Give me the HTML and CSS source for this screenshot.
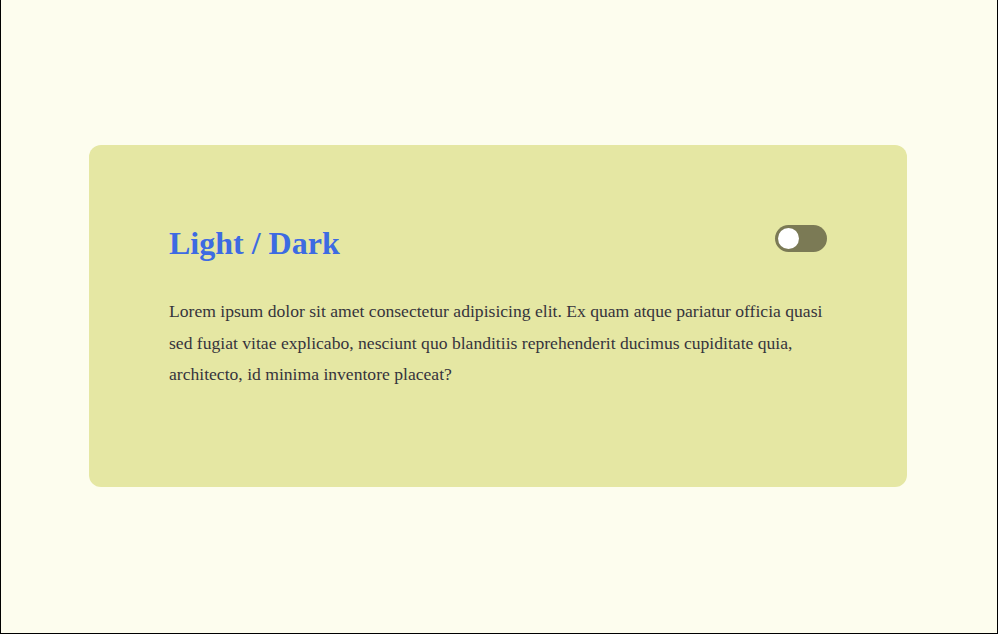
FILE: index.html
```html
<!DOCTYPE html>
<html lang="en">
<head>
<meta charset="utf-8">
<title>Light / Dark</title>
<link rel="stylesheet" href="styles.css">
</head>
<body>
<div class="screen">
  <section class="card">
    <header class="card-head">
      <h1 class="title">Light / Dark</h1>
      <span class="toggle" role="switch" aria-checked="false"><span class="knob"></span></span>
    </header>
    <p class="text">Lorem ipsum dolor sit amet consectetur adipisicing elit. Ex quam atque pariatur officia quasi sed fugiat vitae explicabo, nesciunt quo blanditiis reprehenderit ducimus cupiditate quia, architecto, id minima inventore placeat?</p>
  </section>
</div>
</body>
</html>
```
FILE: styles.css
```css
html, body {
  margin: 0;
  padding: 0;
  height: 100%;
}
body {
  background: #fdfdee;
  font-family: "Liberation Serif", "Times New Roman", serif;
}
.screen {
  box-sizing: border-box;
  height: 100vh;
  padding: 0 2px 1px 0;
  border-left: 1px solid #000;
  border-right: 1px solid #000;
  border-bottom: 1px solid #000;
  display: flex;
  align-items: center;
  justify-content: center;
}
.card {
  box-sizing: border-box;
  width: 818px;
  height: 342px;
  padding: 80px;
  background: #e5e7a3;
  border-radius: 12px;
}
.card-head {
  display: flex;
  justify-content: space-between;
  align-items: flex-start;
}
.title {
  margin: 0;
  font-size: 32px;
  font-weight: bold;
  line-height: 37px;
  color: #3d6be2;
}
.toggle {
  display: flex;
  align-items: center;
  box-sizing: border-box;
  width: 52px;
  height: 27px;
  padding: 0 3px;
  border-radius: 14px;
  background: #7b7a55;
}
.knob {
  width: 21px;
  height: 21px;
  border-radius: 50%;
  background: #fff;
}
.text {
  margin: 34px 0 0;
  font-size: 17.6px;
  line-height: 1.8;
  color: #35343c;
}
```
